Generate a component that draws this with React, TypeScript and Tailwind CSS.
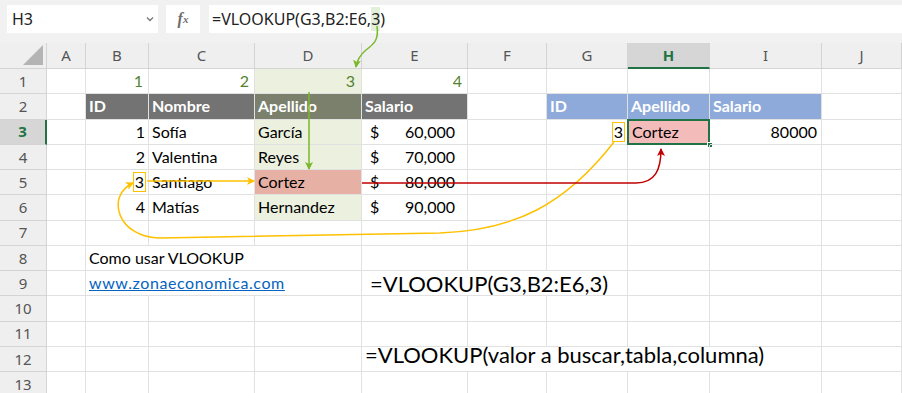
import React from 'react';

// Column letters and pixel widths taken from the screenshot
const COLS = ['A', 'B', 'C', 'D', 'E', 'F', 'G', 'H', 'I', 'J'];

interface CellSpec {
  text?: React.ReactNode;
  cls?: string;
  noR?: boolean;
}

const green = 'bg-[#ebf1de]';
const num = 'justify-end pr-[3px]';
const head = 'text-white font-bold pl-[3px]';

const Money = ({ v }: { v: string }) => (
  <div className="flex w-full justify-between pl-[8px] pr-[12px]">
    <span>$</span>
    <span>{v}</span>
  </div>
);

const Box = ({ children }: { children: React.ReactNode }) => (
  <span className="inline-flex h-[20px] items-center border border-[#ffc000] px-[1px] leading-none">{children}</span>
);

const rows: Record<string, CellSpec>[] = [
  {
    B: { text: '1', cls: 'justify-end pr-[5px] text-[#548235]' },
    C: { text: '2', cls: 'justify-end pr-[5px] text-[#548235]' },
    D: { text: '3', cls: `justify-end pr-[6px] text-[#548235] ${green}` },
    E: { text: '4', cls: 'justify-end pr-[5px] text-[#548235]' },
  },
  {
    B: { text: 'ID', cls: `${head} bg-[#737373]` },
    C: { text: 'Nombre', cls: `${head} bg-[#737373]` },
    D: { text: 'Apellido', cls: `${head} bg-[#7b806c]` },
    E: { text: 'Salario', cls: `${head} bg-[#737373]` },
    G: { text: 'ID', cls: `${head} bg-[#8eaadb]` },
    H: { text: 'Apellido', cls: `${head} bg-[#8eaadb]` },
    I: { text: 'Salario', cls: `${head} bg-[#8eaadb]` },
  },
  {
    B: { text: '1', cls: num },
    C: { text: 'Sofía', cls: 'pl-[3px]' },
    D: { text: 'García', cls: `pl-[3px] ${green}` },
    E: { text: <Money v="60,000" /> },
    G: { text: <Box>3</Box>, cls: 'justify-end pr-[2px]' },
    H: { text: 'Cortez', cls: 'pl-[4px] bg-[#f3bcbb]' },
    I: { text: '80000', cls: 'justify-end pr-[4px]' },
  },
  {
    B: { text: '2', cls: num },
    C: { text: 'Valentina', cls: 'pl-[3px]' },
    D: { text: 'Reyes', cls: `pl-[3px] ${green}` },
    E: { text: <Money v="70,000" /> },
  },
  {
    B: { text: <Box>3</Box>, cls: 'justify-end pr-[2px]' },
    C: { text: 'Santiago', cls: 'pl-[3px]' },
    D: { text: 'Cortez', cls: 'pl-[3px] bg-[#e6b1a4]' },
    E: { text: <Money v="80,000" /> },
  },
  {
    B: { text: '4', cls: num },
    C: { text: 'Matías', cls: 'pl-[3px]' },
    D: { text: 'Hernandez', cls: `pl-[3px] ${green}` },
    E: { text: <Money v="90,000" /> },
  },
  {},
  {
    B: { text: 'Como usar VLOOKUP', cls: 'pl-[3px]', noR: true },
    C: { noR: true },
  },
  {
    B: { text: <span className="text-[#0563c1] underline tracking-[0.6px]">www.zonaeconomica.com</span>, cls: 'pl-[3px]', noR: true },
    C: { noR: true },
    E: { text: <span className="text-[22px]">=VLOOKUP(G3,B2:E6,3)</span>, cls: 'pl-[8px]', noR: true },
    F: { noR: true },
  },
  {},
  {},
  {
    E: { text: <span className="-translate-y-[4px] text-[22px]">=VLOOKUP(valor a buscar,tabla,columna)</span>, cls: 'pl-[3px]', noR: true },
    F: { noR: true },
    G: { noR: true },
    H: { noR: true },
  },
  {},
];

const Arrows = () => (
  <svg className="pointer-events-none absolute left-0 top-0" width="902" height="393" viewBox="0 0 902 393">
    <defs>
      <marker id="ag" markerWidth="8" markerHeight="8" refX="7" refY="4" orient="auto" markerUnits="userSpaceOnUse">
        <path d="M0,0 L8,4 L0,8 L2,4 Z" fill="#7ab929" />
      </marker>
      <marker id="ay" markerWidth="8" markerHeight="8" refX="7" refY="4" orient="auto" markerUnits="userSpaceOnUse">
        <path d="M0,0 L8,4 L0,8 L2,4 Z" fill="#ffc000" />
      </marker>
      <marker id="ar" markerWidth="8" markerHeight="8" refX="7" refY="4" orient="auto" markerUnits="userSpaceOnUse">
        <path d="M0,0 L8,4 L0,8 L2,4 Z" fill="#c00000" />
      </marker>
    </defs>
    {/* formula "3" to column D */}
    <path d="M377 26 C379 40 374 44 366 50 C360 55 357 60 356 67" stroke="#7ab929" strokeWidth="1.5" fill="none" markerEnd="url(#ag)" />
    {/* down column D */}
    <path d="M309 92 L309 169" stroke="#7ab929" strokeWidth="1.5" fill="none" markerEnd="url(#ag)" />
    {/* id 3 -> Cortez */}
    <path d="M147 181 L254 181" stroke="#ffc000" strokeWidth="1.5" fill="none" markerEnd="url(#ay)" />
    {/* G3 lookup value loops back to B5 */}
    <path d="M614 142 C565 205 515 230 440 233 L160 238 C118 238 105 196 133 183" stroke="#ffc000" strokeWidth="1.5" fill="none" markerEnd="url(#ay)" />
    {/* result back to H3 */}
    <path d="M362 183 L636 183 C655 183 661 170 661 149" stroke="#c00000" strokeWidth="1.5" fill="none" markerEnd="url(#ar)" />
  </svg>
);

const App = () => {
  return (
    <div className="relative h-[393px] w-[902px] overflow-hidden bg-white font-['Lato',sans-serif] text-[16px] text-black">
      {/* Formula bar */}
      <div className="flex h-[43px] items-start gap-[8px] bg-[#f1f1f1] pl-[7px] pt-[5px] font-['Noto_Sans',sans-serif]">
        <div className="flex h-[28px] w-[151px] items-center justify-between bg-white pl-[5px] pr-[4px] text-[16px] text-[#222]">
          <span>H3</span>
          <svg width="8" height="6" viewBox="0 0 8 6">
            <path d="M1 1.5 L4 4.5 L7 1.5" stroke="#777" strokeWidth="1.3" fill="none" />
          </svg>
        </div>
        <div className="flex h-[28px] w-[34px] items-center justify-center bg-white font-['Liberation_Serif',serif] text-[16px] font-bold italic text-[#6e6e6e]">
          f<span className="text-[11px]">x</span>
        </div>
        <div className="ml-[1px] flex h-[28px] flex-1 items-center bg-white pl-[3px] text-[16px] text-[#222]">
          =VLOOKUP(G3,B2:E6,<span className="bg-[#e2efda]">3</span>)
        </div>
      </div>

      {/* Sheet grid */}
      <div className="grid grid-cols-[47px_39px_63px_106px_107px_106px_79px_81px_82px_112px_80px] auto-rows-[25.25px] [grid-template-rows:26px]">
        <div className="relative border-b border-r border-[#d4d4d4] bg-[#efefef]">
          <svg className="absolute right-[3px] bottom-[3px]" width="20" height="20" viewBox="0 0 20 20">
            <path d="M20 0 L20 20 L0 20 Z" fill="#b4b4b4" />
          </svg>
        </div>
        {COLS.map((c) => (
          <div
            key={c}
            className={
              c === 'H'
                ? "flex items-center justify-center border-b-2 border-r border-b-[#217346] border-r-[#d4d4d4] bg-[#d6d6d6] font-['Noto_Sans',sans-serif] text-[15px] font-bold text-[#217346]"
                : "flex items-center justify-center border-b border-r border-[#d4d4d4] bg-[#efefef] font-['Noto_Sans',sans-serif] text-[15px] text-[#555]"
            }
          >
            {c}
          </div>
        ))}
        {rows.map((r, i) => (
          <React.Fragment key={i}>
            <div
              className={
                i === 2
                  ? "flex items-center justify-center border-b border-r-2 border-b-[#d4d4d4] border-r-[#217346] bg-[#d6d6d6] font-['Noto_Sans',sans-serif] text-[15px] font-bold text-[#217346]"
                  : "flex items-center justify-center border-b border-r border-[#d4d4d4] bg-[#efefef] font-['Noto_Sans',sans-serif] text-[15px] text-[#555]"
              }
            >
              {i + 1}
            </div>
            {COLS.map((c) => {
              const cell = r[c] || {};
              return (
                <div
                  key={c}
                  className={`relative flex items-center whitespace-nowrap border-b border-[#e1e1e1] ${cell.noR ? '' : 'border-r'} ${cell.cls || ''}`}
                >
                  {cell.text}
                  {i === 2 && c === 'H' && (
                    <>
                      <div className="absolute -bottom-[1px] -left-[1px] -right-[1px] -top-[1px] border-2 border-[#217346]" />
                      <div className="absolute -bottom-[4px] -right-[4px] h-[6px] w-[6px] border border-white bg-[#217346]" />
                    </>
                  )}
                </div>
              );
            })}
          </React.Fragment>
        ))}
      </div>

      <Arrows />
    </div>
  );
};

export default App;
